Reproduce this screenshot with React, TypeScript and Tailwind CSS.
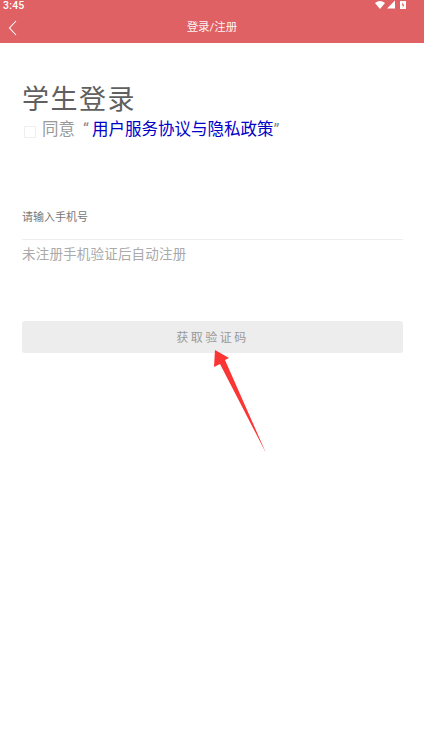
const FONT = "font-['Roboto','Noto_Sans_CJK_SC',sans-serif]"

function StatusIcons() {
  return (
    <svg width="32" height="10" viewBox="0 0 32 10" className="block">
      <path d="M0 3 Q5 -1 10 3 L5 9 Z" fill="#fff" />
      <path d="M12 8.5 L20 0.5 V8.5 Z" fill="#fff" />
      <rect x="25" y="1" width="6" height="8" fill="#fff" />
      <path d="M28 2 L26.8 5.5 H28 L27.6 8 L29.4 4.5 H28.2 Z" fill="#e06060" />
    </svg>
  )
}

export default function App() {
  return (
    <div className={`relative w-[424px] h-[754px] bg-white overflow-hidden ${FONT}`}>
      <div className="h-[43px] bg-[#e06164]">
        <div className="flex items-start justify-between h-[10px] pl-[3px] pr-[17px]">
          <span className="text-[10.5px] leading-[12px] font-medium tracking-[0.2px] text-white">3:45</span>
          <StatusIcons />
        </div>
        <div className="relative flex items-center justify-center h-[33px] pt-[2px]">
          <svg width="10" height="16" viewBox="0 0 10 16" fill="none" className="absolute left-[8px] top-[10px]">
            <path d="M8 1 L1.5 8 L8 15" stroke="#fff" strokeWidth="1.1" />
          </svg>
          <span className="text-[11.5px] text-white/95">登录/注册</span>
        </div>
      </div>

      <div className="pl-[22px] pr-[21px]">
        <h1 className="mt-[39px] text-[27px] leading-[36px] tracking-[1.5px] font-normal text-[#606060]">学生登录</h1>
        <div className="flex items-center h-[20px] mt-[2px]">
          <span className="w-[12px] h-[12px] mt-[3px] ml-[2px] border border-[#eeeeee] rounded-[1px]" />
          <span className="ml-[6px] text-[16.5px] text-[#999999]">同意</span>
          <span className="ml-[8px] w-[9px] text-[16.5px] text-[#888888]">“</span>
          <span className="text-[16.5px] text-[#0000c8]">用户服务协议与隐私政策</span>
          <span className="text-[16.5px] text-[#888888]">”</span>
        </div>

        <div className="mt-[66px] h-[34px] border-b border-[#eeeeee] text-[11px] leading-[24px] text-[#777777]">请输入手机号</div>
        <div className="mt-[5px] text-[13.5px] leading-[18px] tracking-[0.2px] text-[#aaaaaa]">未注册手机验证后自动注册</div>

        <button className="mt-[58px] w-full h-[32px] pt-[1px] rounded-[3px] bg-[#ededed] text-[12px] tracking-[2.5px] text-[#999999]">
          获取验证码
        </button>
      </div>

      {/* red annotation arrow over the page */}
      <svg width="424" height="754" viewBox="0 0 424 754" className="absolute left-0 top-0 pointer-events-none">
        <path d="M215 350 L229 358 L225 360 L266 453 L220 364 L214 367 Z" fill="#fb3434" />
      </svg>
    </div>
  )
}
